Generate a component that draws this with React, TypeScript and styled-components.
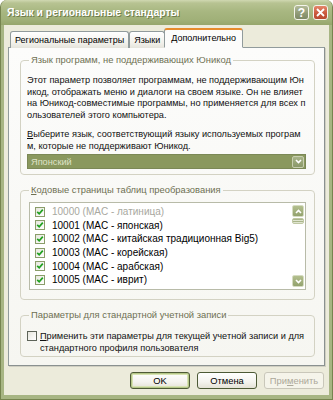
import styled, { createGlobalStyle } from "styled-components";

const GlobalStyle = createGlobalStyle`
  html, body {
    margin: 0;
    padding: 0;
    background: #ffffff;
  }
  body {
    font-family: "Liberation Sans", Arial, sans-serif;
  }
`

const Window = styled.div`
  width: 333px;
  height: 400px;
  box-sizing: border-box;
  display: flex;
  flex-direction: column;
  background: #a7b583;
  border: 1px solid #76844f;
  border-top: none;
  border-radius: 7px 7px 0 0;
  overflow: hidden;
`

const TitleBar = styled.div`
  height: 25px;
  flex: none;
  display: flex;
  align-items: center;
  padding: 0 4px 0 6px;
  box-sizing: border-box;
  background: linear-gradient(to bottom, #d0d8b2 0%, #b7c392 12%, #a8b781 45%, #a0b078 80%, #96a66c 100%);
`

const Title = styled.div`
  flex: 1;
  color: #ffffff;
  font-size: 10.4px;
  font-weight: 700;
  text-shadow: 1px 1px 0 #6f7d4c;
  white-space: nowrap;
`

const CaptionBtn = styled.div<{ $close?: boolean }>`
  width: 15px;
  height: 15px;
  margin-left: 4px;
  box-sizing: border-box;
  border: 1px solid #f4f4ec;
  border-radius: 3px;
  display: flex;
  align-items: center;
  justify-content: center;
  color: #ffffff;
  font-size: 12px;
  font-weight: 700;
  background: ${p => p.$close
    ? "linear-gradient(to bottom, #e4866a, #c9563a 60%, #b84a30)"
    : "linear-gradient(to bottom, #b3bb99, #8e9975 60%, #7f8a66)"};
`

const Body = styled.div`
  flex: 1;
  margin: 0 3px 4px 3px;
  background: #ecebdb;
  display: flex;
  flex-direction: column;
  padding: 3px 4px 0 4px;
`

const TabRow = styled.div`
  display: flex;
  align-items: flex-end;
  height: 20px;
  padding-left: 2px;
  margin-bottom: -1px;
  position: relative;
  z-index: 1;
`

const Tab = styled.div<{ $active?: boolean }>`
  box-sizing: border-box;
  height: ${p => (p.$active ? "20px" : "17px")};
  padding: 0 ${p => (p.$active ? "6px" : "4px")};
  margin-left: ${p => (p.$active ? "-1px" : "0")};
  border: 1px solid #919b9c;
  border-bottom: ${p => (p.$active ? "1px solid #fcfcfb" : "none")};
  border-top: ${p => (p.$active ? "2px solid #e68b2c" : "1px solid #919b9c")};
  border-radius: 3px 3px 0 0;
  background: ${p => (p.$active ? "#fcfcfb" : "linear-gradient(to bottom, #ffffff, #f1f0ea 70%, #e5e4dc)")};
  font-size: 9px;
  line-height: 16px;
  color: #000;
  white-space: nowrap;
`

const Panel = styled.div`
  height: 319px;
  box-sizing: border-box;
  border: 1px solid #919b9c;
  border-right-color: #8a9190;
  border-bottom-color: #8a9190;
  box-shadow: 1px 1px 0 #d0cfc2;
  background: linear-gradient(to bottom, #fcfcfb, #f6f6f1);
  padding: 6px 9px 0 11px;
  display: flex;
  flex-direction: column;
`

const Group = styled.fieldset<{ $h: number }>`
  margin: 0 0 ${p => (p.$h > 100 ? "9px" : "0")} 0;
  height: ${p => p.$h}px;
  box-sizing: border-box;
  padding: 0 8px 0 6px;
  border: 1px solid #d3d2c3;
  border-radius: 4px;
  min-width: 0;
`

const Legend = styled.legend`
  padding: 0 2px;
  margin-left: 2px;
  font-size: 9.4px;
  line-height: 12px;
  color: #6e7052;
`

const Para = styled.div<{ $top: number }>`
  margin-top: ${p => p.$top}px;
  font-size: 9.2px;
  line-height: 11.7px;
  color: #111;
  white-space: nowrap;
`

const Line = styled.div``

const Combo = styled.div`
  margin-top: 2px;
  height: 15px;
  box-sizing: border-box;
  border: 1px solid #7b8856;
  background: #8a985e;
  display: flex;
  align-items: center;
  padding: 0 1px 0 3px;
`

const ComboText = styled.div`
  flex: 1;
  color: #dfe3c8;
  font-size: 9.2px;
`

const ArrowBtn = styled.div`
  width: 12px;
  height: 12px;
  box-sizing: border-box;
  border: 1px solid #c8cfb0;
  border-radius: 2px;
  background: linear-gradient(to bottom, #a8b488, #8a9868);
  display: flex;
  align-items: center;
  justify-content: center;
`

const ListBox = styled.div`
  margin: 6px 0 0 2px;
  height: 88px;
  box-sizing: border-box;
  border: 1px solid #b8bba8;
  background: #ffffff;
  display: flex;
  padding: 2px 1px 0 5px;
`

const Items = styled.div`
  flex: 1;
`

const Item = styled.div<{ $disabled?: boolean }>`
  height: 13.6px;
  display: flex;
  align-items: center;
  gap: 7px;
  font-size: 10px;
  color: ${p => (p.$disabled ? "#a8a8a0" : "#000")};
  white-space: nowrap;
`

const Box = styled.div<{ $checked?: boolean }>`
  width: 10px;
  height: 10px;
  flex: none;
  box-sizing: border-box;
  border: 1px solid ${p => (p.$checked ? "#8a9d6a" : "#5e6459")};
  background: linear-gradient(135deg, #e6e6dd, #ffffff);
  display: flex;
  align-items: center;
  justify-content: center;
`

const ScrollBar = styled.div`
  width: 12px;
  display: flex;
  flex-direction: column;
  padding-bottom: 2px;
`

const ScrollBtn = styled.div`
  width: 12px;
  height: 12px;
  box-sizing: border-box;
  border: 1px solid #d6dcc2;
  border-radius: 2px;
  background: linear-gradient(to bottom, #b3bf8e, #93a26e);
  display: flex;
  align-items: center;
  justify-content: center;
`

const Thumb = styled.div`
  height: 6px;
  margin-top: 1px;
  box-sizing: border-box;
  border: 1px solid #c0c8a4;
  border-radius: 2px;
  background: repeating-linear-gradient(to bottom, #a9b58a 0, #a9b58a 1px, #dfe4cf 1px, #dfe4cf 2px);
`

const Track = styled.div`
  flex: 1;
`

const CheckRow = styled.div`
  margin-top: 10px;
  display: flex;
  gap: 3px;
  align-items: flex-start;
`

const CheckText = styled.div`
  font-size: 9.2px;
  line-height: 11.7px;
  color: #111;
  white-space: nowrap;
`

const ButtonRow = styled.div`
  display: flex;
  justify-content: flex-end;
  gap: 7px;
  margin-top: 6px;
  padding-right: 1px;
`

const Button = styled.div<{ $default?: boolean; $disabled?: boolean }>`
  width: 60px;
  height: 17px;
  box-sizing: border-box;
  border: 1px solid ${p => (p.$disabled ? "#c9c7ba" : "#4d5a36")};
  border-radius: 3px;
  background: ${p => (p.$disabled ? "#f5f4ea" : "linear-gradient(to bottom, #ffffff, #f4f3ee 60%, #e4e2d6)")};
  box-shadow: ${p => (p.$default ? "inset 0 0 0 1px #b5c788, inset 0 0 0 2px #d8e3b4" : "none")};
  display: flex;
  align-items: center;
  justify-content: center;
  font-size: 9.4px;
  color: ${p => (p.$disabled ? "#aca899" : "#000")};
`

const U = styled.span`
  text-decoration: underline;
`

const Chevron = ({ up }: { up?: boolean }) => (
  <svg width="7" height="5" viewBox="0 0 7 5">
    <path d={up ? "M1 4 L3.5 1.5 L6 4" : "M1 1 L3.5 3.5 L6 1"} fill="none" stroke="#ffffff" strokeWidth="1.6" />
  </svg>
)

const Check = () => (
  <svg width="8" height="8" viewBox="0 0 8 8">
    <path d="M1.2 3.8 L3.2 5.8 L6.8 1.6" fill="none" stroke="#21a121" strokeWidth="1.7" />
  </svg>
)

const codePages = [
  { id: "10000", name: "латиница", disabled: true },
  { id: "10001", name: "японская" },
  { id: "10002", name: "китайская традиционная Big5" },
  { id: "10003", name: "корейская" },
  { id: "10004", name: "арабская" },
  { id: "10005", name: "иврит" },
]

export default function App() {
  return (
    <>
      <GlobalStyle />
      <Window>
        <TitleBar>
          <Title>Язык и региональные стандарты</Title>
          <CaptionBtn>?</CaptionBtn>
          <CaptionBtn $close>
            <svg width="9" height="9" viewBox="0 0 9 9">
              <path d="M1 1 L8 8 M8 1 L1 8" stroke="#ffffff" strokeWidth="1.8" />
            </svg>
          </CaptionBtn>
        </TitleBar>
        <Body>
          <TabRow>
            <Tab>Региональные параметры</Tab>
            <Tab>Языки</Tab>
            <Tab $active>Дополнительно</Tab>
          </TabRow>
          <Panel>
            <Group $h={121}>
              <Legend>Язык программ, не поддерживающих Юникод</Legend>
              <Para $top={9}>
                <Line>Этот параметр позволяет программам, не поддерживающим Юн</Line>
                <Line>икод, отображать меню и диалоги на своем языке. Он не влияет</Line>
                <Line>на Юникод-совместимые программы, но применяется для всех п</Line>
                <Line>ользователей этого компьютера.</Line>
              </Para>
              <Para $top={7}>
                <Line><U>В</U>ыберите язык, соответствующий языку используемых програм</Line>
                <Line>м, которые не поддерживают Юникод.</Line>
              </Para>
              <Combo>
                <ComboText>Японский</ComboText>
                <ArrowBtn><Chevron /></ArrowBtn>
              </Combo>
            </Group>
            <Group $h={116}>
              <Legend><U>К</U>одовые страницы таблиц преобразования</Legend>
              <ListBox>
                <Items>
                  {codePages.map(cp => (
                    <Item key={cp.id} $disabled={cp.disabled}>
                      <Box $checked><Check /></Box>
                      {cp.id} (MAC - {cp.name})
                    </Item>
                  ))}
                </Items>
                <ScrollBar>
                  <ScrollBtn><Chevron up /></ScrollBtn>
                  <Thumb />
                  <Track />
                  <ScrollBtn><Chevron /></ScrollBtn>
                </ScrollBar>
              </ListBox>
            </Group>
            <Group $h={48}>
              <Legend>Параметры для стандартной учетной записи</Legend>
              <CheckRow>
                <Box />
                <CheckText>
                  <Line><U>П</U>рименить эти параметры для текущей учетной записи и для</Line>
                  <Line>стандартного профиля пользователя</Line>
                </CheckText>
              </CheckRow>
            </Group>
          </Panel>
          <ButtonRow>
            <Button $default>OK</Button>
            <Button>Отмена</Button>
            <Button $disabled>При<U>м</U>енить</Button>
          </ButtonRow>
        </Body>
      </Window>
    </>
  )
}
